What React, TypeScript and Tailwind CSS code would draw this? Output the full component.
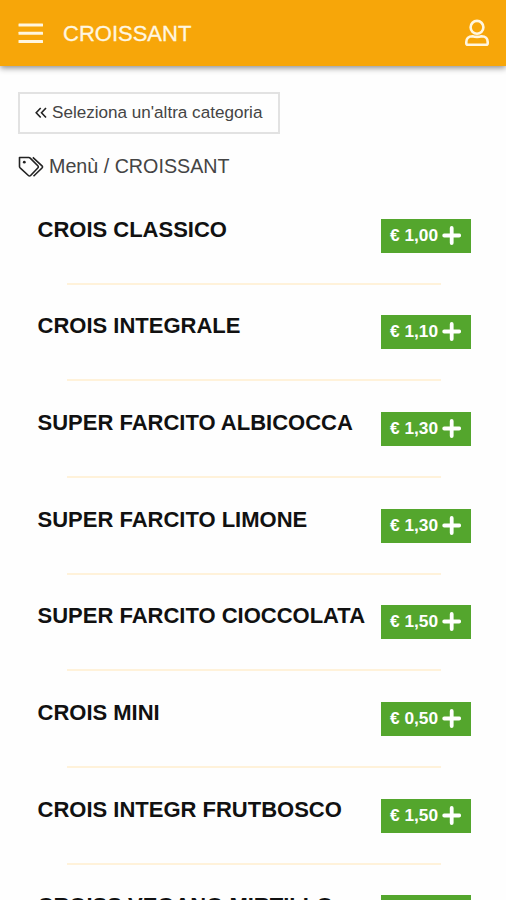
const products = [
  { name: "CROIS CLASSICO", price: "1,00" },
  { name: "CROIS INTEGRALE", price: "1,10" },
  { name: "SUPER FARCITO ALBICOCCA", price: "1,30" },
  { name: "SUPER FARCITO LIMONE", price: "1,30" },
  { name: "SUPER FARCITO CIOCCOLATA", price: "1,50" },
  { name: "CROIS MINI", price: "0,50" },
  { name: "CROIS INTEGR FRUTBOSCO", price: "1,50" },
  { name: "CROISS VEGANO MIRTILLO", price: "1,50" },
];

function MenuIcon() {
  return (
    <svg width="25" height="21" viewBox="0 0 25 21" fill="#fff6e0">
      <rect x="0.5" y="0.5" width="24.5" height="3" rx="0.5" />
      <rect x="0.5" y="8.700" width="24.5" height="3" rx="0.5" />
      <rect x="0.5" y="17" width="24.5" height="3" rx="0.5" />
    </svg>
  );
}

function UserIcon() {
  return (
    <svg width="26" height="28" viewBox="0 0 26 28" fill="none" stroke="#fff6e0" strokeWidth="2.6" strokeLinejoin="round">
      <circle cx="13" cy="8.3" r="6.4" />
      <path d="M8.500 17.300C4.300 17.300 2.300 19.800 2.300 23v1.300c0 1 .5 1.500 1.500 1.500h18.400c1 0 1.500-.5 1.500-1.500V23c0-3.200-2-5.700-6.200-5.700-1.500.5-3 .6-4.500.6s-3-.1-4.500-.6z" />
    </svg>
  );
}

function ChevronsIcon() {
  return (
    <svg className="mr-[5px] ml-[1px]" width="12" height="12" viewBox="0 0 12 12" fill="none" stroke="#222" strokeWidth="1.6">
      <path d="M5.700 1 1.200 5.800l4.500 4.700M11 1 6.500 5.800l4.500 4.700" />
    </svg>
  );
}

function TagsIcon() {
  return (
    <svg className="mr-[5px]" width="26" height="22" viewBox="0 0 26 22" fill="none" stroke="#222" strokeWidth="1.6" strokeLinejoin="round">
      <path d="M1.500 1.500h9.300c.6 0 1 .2 1.400.6l7.600 7.700c.7.700.7 1.500 0 2.200l-7.200 7.500c-.7.700-1.500.7-2.200 0L2.100 11.800c-.4-.4-.6-.8-.6-1.400z" />
      <path d="M14.800 1.400 24 9.800c.7.700.7 1.500 0 2.200l-8.500 8.300" />
      <circle cx="6.300" cy="6.200" r="1.400" fill="#222" stroke="none" />
    </svg>
  );
}

function PlusIcon() {
  return (
    <svg className="-mt-px" width="19" height="19" viewBox="0 0 19 19" fill="none" stroke="#fff" strokeWidth="3.8" strokeLinecap="round">
      <path d="M9.700 2v15M2.200 9.500h15" />
    </svg>
  );
}

function ProductRow({ name, price }: { name: string; price: string }) {
  return (
    <li className="h-[96.670px] shrink-0">
      <div className="flex h-[65px] items-start justify-between pr-[35px] pl-[37.500px]">
        <h2 className="text-[22px] leading-[24px] font-bold whitespace-nowrap text-[#111]">{name}</h2>
        <button className="mt-[1px] flex h-[34px] w-[90px] items-center gap-[4px] bg-[#54a62d] pl-[9px] text-[17.300px] font-bold whitespace-nowrap text-white">
          <span>€ {price}</span>
          <PlusIcon />
        </button>
      </div>
      <hr className="mr-[65px] ml-[67px] border-t-2 border-[#fff2da]" />
    </li>
  );
}

export default function App() {
  return (
    <div className="flex h-[900px] w-full flex-col overflow-hidden bg-[#fefefe] font-['Liberation_Sans',Arial,sans-serif]">
      <header className="flex h-[66px] shrink-0 items-center bg-[#f7a609] pr-[16px] pl-[18px] shadow-[0_2px_6px_rgba(0,0,0,0.450)]">
        <MenuIcon />
        <h1 className="ml-[20px] flex-1 pt-px text-[22px] leading-none text-[#fff6e0] [-webkit-text-stroke:0.3px_#fff6e0]">CROISSANT</h1>
        <UserIcon />
      </header>

      <main className="flex flex-col">
        <button className="mt-[26px] ml-[18px] flex h-[42px] w-[262px] items-center border-2 border-[#e2e2e2] pl-[14px] text-[17.100px] whitespace-nowrap text-[#444]">
          <ChevronsIcon />
          Seleziona un'altra categoria
        </button>
        <div className="mt-[20px] ml-[18px] flex h-[26px] items-center text-[19.700px] text-[#444]">
          <TagsIcon />
          Menù / CROISSANT
        </div>
        <ul className="mt-[37.600px] flex flex-col">
          {products.map((p) => (
            <ProductRow key={p.name} name={p.name} price={p.price} />
          ))}
        </ul>
      </main>
    </div>
  );
}
